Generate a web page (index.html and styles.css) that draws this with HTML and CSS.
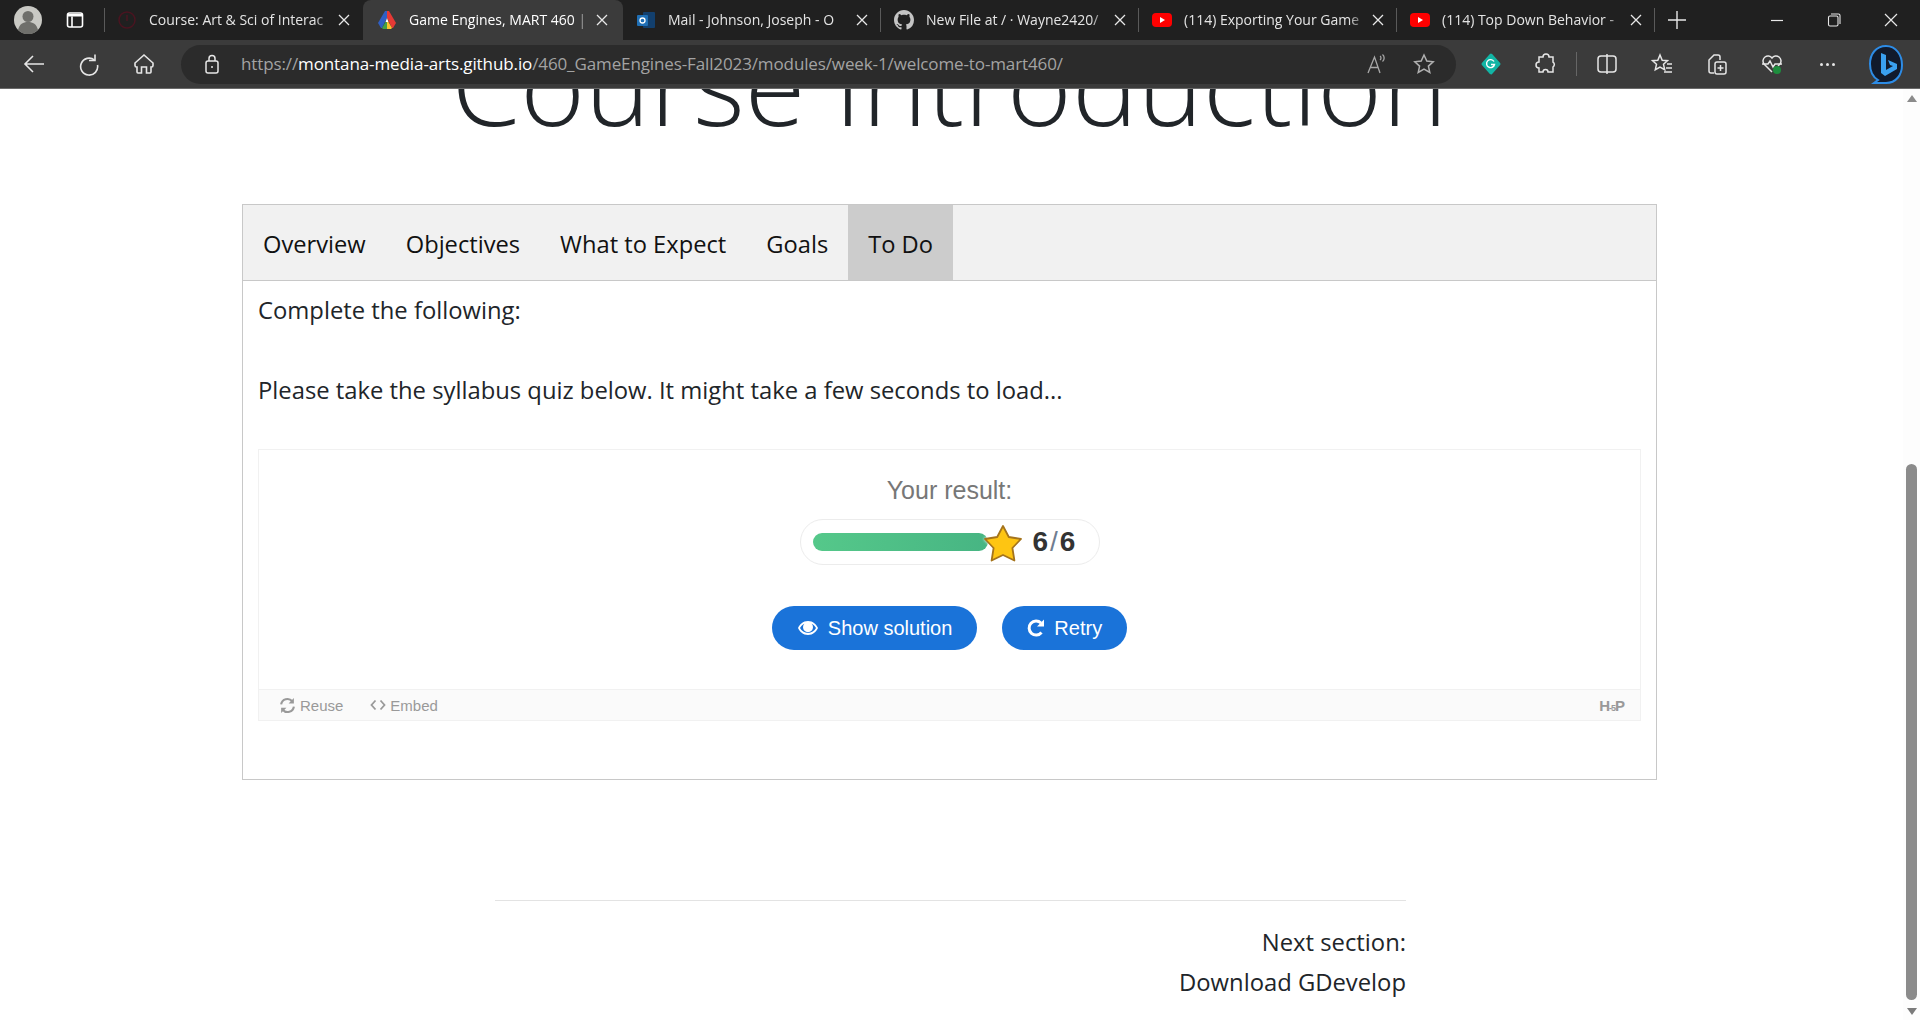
FILE: index.html
```html
<!DOCTYPE html>
<html lang="en">
<head>
    <meta charset="UTF-8">
    <meta name="viewport" content="width=device-width, initial-scale=1.0">
    <title>Game Engines, MART 460</title>
    <link rel="stylesheet" href="styles.css">
</head>
<body>
    <!-- Browser frame -->
    <header class="browser">
        <div class="tabstrip">
            <div class="profile">
                <svg width="28" height="28" viewBox="0 0 28 28"><circle cx="14" cy="14" r="14" fill="#c9c9c4"/><circle cx="14" cy="10.500" r="5.500" fill="#6f6f6b"/><path d="M4 24c1.500-6 5-8 10-8s8.500 2 10 8a14 14 0 0 1-20 0z" fill="#6f6f6b"/></svg>
            </div>
            <div class="tab-actions">
                <svg width="18" height="18" viewBox="0 0 18 18" fill="none" stroke="#fff" stroke-width="1.600"><rect x="1.500" y="2" width="15" height="14" rx="2"/><path d="M6 5.500V16"/><path d="M2 3h14v2.500H2z" fill="#fff" stroke="none"/></svg>
            </div>
            <div class="tab tab-first">
                <svg class="favicon" viewBox="0 0 20 20" fill="none" stroke="#4a1420" stroke-width="1.500"><circle cx="10" cy="10" r="8"/><path d="M10 5v6"/></svg>
                <span class="tab-title">Course: Art &amp; Sci of Interac</span>
                <svg class="tab-close" width="12" height="12" viewBox="0 0 12 12" stroke="#e8e8e8" stroke-width="1.300"><path d="M1 1l10 10M11 1 1 11"/></svg>
            </div>
            <div class="tab tab-active">
                <svg class="favicon" viewBox="0 0 20 20"><path d="M8 1h2v7L5 18H4L1 13z" fill="#2f5fc4"/><path d="M10 1h2l7 12-3 5h-1l-5-10z" fill="#e53935"/><path d="M5 18l3.500-6H10v7H6z" fill="#43a047"/><path d="M10 12h1.500l3.500 6-1 1h-4z" fill="#fbc02d"/><path d="M10 8l-1.500 4h3z" fill="#fff"/></svg>
                <span class="tab-title">Game Engines, MART 460 |</span>
                <svg class="tab-close" width="12" height="12" viewBox="0 0 12 12" stroke="#e8e8e8" stroke-width="1.300"><path d="M1 1l10 10M11 1 1 11"/></svg>
            </div>
            <div class="tab">
                <svg class="favicon" viewBox="0 0 20 20"><rect x="7" y="2" width="12" height="16" rx="1" fill="#123f6d"/><rect x="1" y="5" width="11" height="11" rx="1" fill="#1f6fb5"/><circle cx="6.500" cy="10.500" r="2.500" fill="none" stroke="#fff" stroke-width="1.300"/></svg>
                <span class="tab-title">Mail - Johnson, Joseph - O</span>
                <svg class="tab-close" width="12" height="12" viewBox="0 0 12 12" stroke="#e8e8e8" stroke-width="1.300"><path d="M1 1l10 10M11 1 1 11"/></svg>
            </div>
            <div class="tab">
                <svg class="favicon" viewBox="0 0 16 16" fill="#c4c4c4"><path d="M8 0C3.580 0 0 3.580 0 8c0 3.540 2.290 6.530 5.470 7.590.4.070.55-.17.55-.38 0-.19-.01-.82-.01-1.490-2.010.37-2.530-.49-2.690-.94-.09-.23-.48-.94-.82-1.130-.28-.15-.68-.52-.01-.53.630-.01 1.080.58 1.230.82.720 1.210 1.870.87 2.330.66.070-.52.280-.87.510-1.070-1.780-.2-3.640-.89-3.640-3.950 0-.87.310-1.590.820-2.150-.08-.2-.36-1.020.08-2.120 0 0 .67-.21 2.200.82.640-.18 1.320-.27 2-.27s1.360.09 2 .27c1.530-1.040 2.200-.82 2.200-.82.440 1.100.16 1.920.08 2.120.51.560.82 1.270.82 2.150 0 3.070-1.870 3.750-3.650 3.950.29.250.54.730.54 1.480 0 1.070-.01 1.930-.01 2.200 0 .21.150.46.550.38A8.010 8.010 0 0 0 16 8c0-4.420-3.580-8-8-8z"/></svg>
                <span class="tab-title">New File at / &#183; Wayne2420/</span>
                <svg class="tab-close" width="12" height="12" viewBox="0 0 12 12" stroke="#e8e8e8" stroke-width="1.300"><path d="M1 1l10 10M11 1 1 11"/></svg>
            </div>
            <div class="tab">
                <svg class="favicon" viewBox="0 0 20 20"><rect y="3" width="20" height="14" rx="4" fill="#f00"/><path d="M8 7l5 3-5 3z" fill="#fff"/></svg>
                <span class="tab-title">(114) Exporting Your Game</span>
                <svg class="tab-close" width="12" height="12" viewBox="0 0 12 12" stroke="#e8e8e8" stroke-width="1.300"><path d="M1 1l10 10M11 1 1 11"/></svg>
            </div>
            <div class="tab">
                <svg class="favicon" viewBox="0 0 20 20"><rect y="3" width="20" height="14" rx="4" fill="#f00"/><path d="M8 7l5 3-5 3z" fill="#fff"/></svg>
                <span class="tab-title">(114) Top Down Behavior -</span>
                <svg class="tab-close" width="12" height="12" viewBox="0 0 12 12" stroke="#e8e8e8" stroke-width="1.300"><path d="M1 1l10 10M11 1 1 11"/></svg>
            </div>
            <div class="new-tab">
                <svg width="18" height="18" viewBox="0 0 18 18" stroke="#e8e8e8" stroke-width="1.400"><path d="M9 0v18M0 9h18"/></svg>
            </div>
            <div class="window-controls">
                <svg width="14" height="14" viewBox="0 0 14 14" stroke="#e8e8e8" stroke-width="1.200"><path d="M1 7.500h12"/></svg>
                <svg width="14" height="14" viewBox="0 0 14 14" fill="none" stroke="#e8e8e8" stroke-width="1.100"><rect x="1.500" y="3" width="9.500" height="10" rx="1.500"/><path d="M4 1h7.500A1.500 1.500 0 0 1 13 2.500V11"/></svg>
                <svg width="14" height="14" viewBox="0 0 14 14" stroke="#e8e8e8" stroke-width="1.200"><path d="M1 1l12 12M13 1 1 13"/></svg>
            </div>
        </div>
        <div class="toolbar">
            <div class="nav-buttons">
                <svg width="24" height="24" viewBox="0 0 24 24" fill="none" stroke="#e6e6e6" stroke-width="1.600"><path d="M22 12H3M11 4l-8 8 8 8"/></svg>
                <svg width="24" height="24" viewBox="0 0 24 24" fill="none" stroke="#e6e6e6" stroke-width="1.600"><path d="M18 2.500v6h-6"/><path d="M17.500 8A8.500 8.500 0 1 0 20.500 13"/></svg>
                <svg width="24" height="24" viewBox="0 0 24 24" fill="none" stroke="#e6e6e6" stroke-width="1.600"><path d="M3 11 12 3l9 8v2.500a1.500 1.500 0 0 1-1.500 1.500H19v5a1 1 0 0 1-1 1h-3.500v-6h-5v6H6a1 1 0 0 1-1-1v-5H4.500A1.500 1.500 0 0 1 3 13.500z"/></svg>
            </div>
            <div class="omnibox">
                <svg class="lock" width="18" height="20" viewBox="0 0 18 20" fill="none" stroke="#e6e6e6" stroke-width="1.500"><rect x="3" y="7" width="12" height="12" rx="2"/><path d="M6 7V4.500a3 3 0 0 1 6 0V7"/><circle cx="9" cy="13" r="1" fill="#e6e6e6" stroke="none"/></svg>
                <div class="url"><span class="url-dim">https://</span>montana-media-arts.github.io<span class="url-dim">/460_GameEngines-Fall2023/modules/week-1/welcome-to-mart460/</span></div>
                <svg width="22" height="22" viewBox="0 0 22 22" fill="none" stroke="#a8a8a8" stroke-width="1.300"><path d="M3 20 9.500 4 15 20M5.500 14.500h8M15 3c1.300.8 1.300 3 0 4M17.500 1.500c2.200 1.800 2.200 5 0 7"/></svg>
                <svg class="omni-star" width="22" height="22" viewBox="0 0 22 22" fill="none" stroke="#b0b0b0" stroke-width="1.500"><path d="m11 2 2.800 6 6.400.7-4.800 4.400 1.400 6.400L11 16.200l-5.800 3.300 1.400-6.400-4.800-4.400L8.200 8z"/></svg>
            </div>
            <div class="extensions">
                <svg width="24" height="24" viewBox="0 0 24 24"><path d="M12 3 20 12 12 21 4 12z" fill="#12b5a5" stroke="#12b5a5" stroke-width="3" stroke-linejoin="round"/><path d="M15 9.500a4 4 0 1 0 .5 3H12" fill="none" stroke="#fff" stroke-width="1.400"/></svg>
                <svg width="24" height="24" viewBox="0 0 24 24" fill="none" stroke="#e6e6e6" stroke-width="1.500"><path d="M9 5a3 3 0 0 1 6 0h4v5a3 3 0 0 1 0 5v5h-5a2.500 2.500 0 0 0-5 0H5v-4a3 3 0 0 1 0-6V5z"/></svg>
                <span class="toolbar-divider"></span>
                <svg width="24" height="24" viewBox="0 0 24 24" fill="none" stroke="#e6e6e6" stroke-width="1.500"><rect x="3" y="4" width="18" height="16" rx="3"/><path d="M12 2v20"/></svg>
                <svg width="24" height="24" viewBox="0 0 24 24" fill="none" stroke="#e6e6e6" stroke-width="1.500"><path d="m10 3 2.200 5.200 5.300.5-4 3.600 1.200 5.400L10 15l-4.700 2.700 1.200-5.400-4-3.600 5.300-.5zM17 12h5M16 16h6M14 20h8"/></svg>
                <svg width="24" height="24" viewBox="0 0 24 24" fill="none" stroke="#e6e6e6" stroke-width="1.500"><path d="M9 21H6a2 2 0 0 1-2-2V8l5-5h4a2 2 0 0 1 2 2v3"/><rect x="10" y="10" width="11" height="12" rx="2"/><path d="M15.500 13v6M12.500 16h6"/></svg>
                <svg width="24" height="24" viewBox="0 0 24 24" fill="none" stroke="#e6e6e6" stroke-width="1.500"><path d="M12 20 4 12a5 5 0 0 1 8-6 5 5 0 0 1 8 6l-2 2"/><path d="M2 12h6l2-3 3 6 2-3h7"/><circle cx="17" cy="18" r="4" fill="#1e8e3e" stroke="none"/></svg>
                <span class="more-dots"><i></i><i></i><i></i></span>
                <svg class="bing" width="36" height="40" viewBox="0 0 36 40"><path d="M18 2C8 2 2 10 2 20c0 8 3 13 8 16l-4 3h12c10 0 16-8 16-18S28 2 18 2z" fill="#111a2c" stroke="#2d8ce6" stroke-width="2"/><path d="M13 9l5 2v15l7-4-3-1-2-5 9 4v5l-12 7-4-3z" fill="#3aa0f0"/></svg>
            </div>
        </div>
    </header>

    <div class="viewport">
        <main class="page">
            <h1 class="page-title">Course Introduction</h1>

            <section class="tabs-card">
                <nav class="tabs-nav">
                    <a class="tabs-link">Overview</a>
                    <a class="tabs-link">Objectives</a>
                    <a class="tabs-link">What to Expect</a>
                    <a class="tabs-link">Goals</a>
                    <a class="tabs-link tabs-link-active">To Do</a>
                </nav>
                <div class="tabs-body">
                    <p class="intro">Complete the following:</p>
                    <p class="intro intro-last">Please take the syllabus quiz below. It might take a few seconds to load...</p>

                    <!-- H5P embed -->
                    <div class="quiz">
                        <div class="quiz-result">
                            <div class="result-label">Your result:</div>
                            <div class="score-pill">
                                <div class="score-bar">
                                    <svg class="score-star" width="42" height="40" viewBox="0 0 42 40"><path d="M21 3l5.800 11 12.200 2-8.600 9 2 12.500L21 32l-11.400 5.500 2-12.500L3 16l12.200-2z" fill="#fec512" stroke="#a5741c" stroke-width="1.800" stroke-linejoin="round"/></svg>
                                </div>
                                <div class="score-text">6<span class="score-slash">/</span>6</div>
                            </div>
                            <div class="quiz-buttons">
                                <button class="quiz-btn">
                                    <svg width="22" height="16" viewBox="0 0 22 16" fill="#fff"><path fill-rule="evenodd" d="M11 1C6 1 2.500 4.500 1 8c1.500 3.500 5 7 10 7s8.500-3.500 10-7c-1.500-3.500-5-7-10-7zm0 12c-3.500 0-6.500-2.200-8-5 1-1.800 2.500-3.300 4.400-4.200A5 5 0 1 0 14.600 3.800C16.500 4.700 18 6.200 19 8c-1.500 2.800-4.500 5-8 5z"/></svg>
                                    Show solution
                                </button>
                                <button class="quiz-btn">
                                    <svg width="18" height="18" viewBox="0 0 18 18" fill="none" stroke="#fff" stroke-width="3"><path d="M14.500 13.500A7 7 0 1 1 14 4"/><path d="M17 0.500v7h-7z" fill="#fff" stroke="none"/></svg>
                                    Retry
                                </button>
                            </div>
                        </div>
                        <div class="quiz-footer">
                            <span class="footer-link">
                                <svg width="17" height="17" viewBox="0 0 16 16" fill="none" stroke="#999" stroke-width="2"><path d="M2 7a6 6 0 0 1 10.500-3M14 9a6 6 0 0 1-10.500 3"/><path d="M14 1v5H9zM2 15v-5h5z" fill="#999" stroke="none"/></svg>
                                Reuse
                            </span>
                            <span class="footer-link">
                                <svg width="16" height="12" viewBox="0 0 16 12" fill="none" stroke="#999" stroke-width="1.800"><path d="M5.500 1.500 1.500 6l4 4.500M10.500 1.500l4 4.500-4 4.500"/></svg>
                                Embed
                            </span>
                            <span class="h5p-mark">H<small>-5</small>P</span>
                        </div>
                    </div>
                </div>
            </section>

            <div class="next-section">
                <div>Next section:</div>
                <div>Download GDevelop</div>
            </div>
        </main>

        <div class="scrollbar">
            <span class="arrow-up"></span>
            <div class="scroll-track"><div class="scroll-thumb"></div></div>
            <span class="arrow-down"></span>
        </div>
    </div>
</body>
</html>
```

FILE: styles.css
```css
* {
    box-sizing: border-box;
}
html, body {
    height: 100%;
}
body {
    margin: 0;
    display: flex;
    flex-direction: column;
    overflow: hidden;
    background: #fff;
    font-family: "Open Sans", "Noto Sans", sans-serif;
    color: #212529;
}

/* Browser frame */
.browser {
    flex: none;
    position: relative;
    z-index: 2;
    background: #3b3b3b;
    border-bottom: 1px solid #6a6a6a;
    font-family: "Open Sans", sans-serif;
}
.tabstrip {
    height: 40px;
    display: flex;
    align-items: center;
    background: #202020;
}
.profile {
    width: 55px;
    padding-left: 14px;
    display: flex;
}
.tab-actions {
    width: 50px;
    height: 40px;
    padding-left: 11px;
    display: flex;
    align-items: center;
    background: linear-gradient(#5a5a5a, #5a5a5a) right center / 1px 24px no-repeat;
}
.tab {
    width: 258px;
    height: 40px;
    padding: 0 8px 0 13px;
    display: flex;
    align-items: center;
    color: #e4e4e4;
    font-size: 14px;
    background: linear-gradient(#5a5a5a, #5a5a5a) right center / 1px 24px no-repeat;
}
.tab-first {
    padding-left: 12px;
    background: none;
}
.tab-active {
    width: 260px;
    padding: 0 10px 0 14px;
    background: #3b3b3b;
    border-radius: 8px 8px 0 0;
    color: #fff;
}
.favicon {
    flex: none;
    width: 20px;
    height: 20px;
    margin-right: 12px;
}
.tab-title {
    flex: 1;
    min-width: 0;
    padding-bottom: 2px;
    white-space: nowrap;
    overflow: hidden;
    -webkit-mask-image: linear-gradient(to right, #000 90%, transparent 100%);
    mask-image: linear-gradient(to right, #000 90%, transparent 100%);
}
.tab-close {
    flex: none;
    margin: 0 5px;
}
.new-tab {
    width: 46px;
    padding-left: 13px;
    display: flex;
}
.window-controls {
    margin-left: auto;
    width: 150px;
    padding-right: 22px;
    display: flex;
    justify-content: space-between;
}
.toolbar {
    height: 48px;
    display: flex;
    align-items: center;
}
.nav-buttons {
    width: 181px;
    padding-left: 22px;
    display: flex;
    gap: 31px;
}
.omnibox {
    width: 1275px;
    height: 39px;
    padding: 0 21px 0 22px;
    display: flex;
    align-items: center;
    background: #2b2b2b;
    border-radius: 20px;
}
.lock {
    flex: none;
    margin-right: 20px;
}
.url {
    flex: 1;
    padding-bottom: 2px;
    font-size: 17px;
    letter-spacing: -0.1px;
    color: #fff;
    white-space: nowrap;
}
.url-dim {
    font-size: 17px;
    letter-spacing: -0.12px;
    color: #a3a3a3;
}
.omni-star {
    margin-left: 26px;
}
.extensions {
    flex: 1;
    display: flex;
    align-items: center;
    gap: 31px;
    padding-left: 23px;
}
.toolbar-divider {
    width: 1px;
    height: 24px;
    margin: 0 -13px;
    background: #666;
}
.more-dots {
    width: 24px;
    display: flex;
    justify-content: center;
    gap: 3px;
}
.more-dots i {
    width: 3px;
    height: 3px;
    border-radius: 50%;
    background: #e6e6e6;
}
.bing {
    margin-left: -2px;
}

/* Page */
.viewport {
    flex: 1;
    min-height: 0;
    display: flex;
}
.page {
    flex: 1;
    min-width: 0;
    overflow: hidden;
    padding: 0 246px 0 242px;
}
.page-title {
    margin: -95px 0 0;
    height: 210px;
    font-weight: 300;
    font-size: 110.5px;
    line-height: 178px;
    text-align: center;
    white-space: nowrap;
    color: #212529;
}
.tabs-card {
    height: 576px;
    border: 1px solid #c8c8c8;
}
.tabs-nav {
    height: 76px;
    display: flex;
    background: #f1f1f1;
    border-bottom: 1px solid #c8c8c8;
}
.tabs-link {
    padding: 3px 20px 0;
    display: flex;
    align-items: center;
    font-size: 23.7px;
    color: #111;
}
.tabs-link-active {
    background: #ccc;
}
.tabs-body {
    padding: 9px 15px 0;
}
.intro {
    margin: 0 0 40px;
    font-size: 23.8px;
    line-height: 40px;
    color: #212529;
}
.intro-last {
    margin-bottom: 39px;
}
.quiz {
    border: 1px solid #f1f1f1;
    font-family: "Liberation Sans", Arial, sans-serif;
}
.quiz-result {
    height: 239px;
    padding-top: 24px;
    display: flex;
    flex-direction: column;
    align-items: center;
}
.result-label {
    font-size: 25px;
    line-height: 32px;
    color: #777;
}
.score-pill {
    width: 300px;
    height: 46px;
    margin-top: 13px;
    padding: 0 12px;
    display: flex;
    align-items: center;
    border: 1px solid #ececec;
    border-radius: 23px;
}
.score-bar {
    position: relative;
    width: 175px;
    height: 18px;
    border-radius: 9px;
    background: linear-gradient(to right, #55c88a, #47b583);
}
.score-star {
    position: absolute;
    right: -36px;
    top: -10px;
    filter: drop-shadow(0 0 1.500px #fff);
}
.score-text {
    margin-left: 45px;
    font-size: 28px;
    font-weight: bold;
    color: #333;
}
.score-slash {
    margin: 0 2px;
    font-weight: normal;
    color: #6f7d91;
}
.quiz-buttons {
    margin-top: 41px;
    display: flex;
    gap: 25px;
}
.quiz-btn {
    height: 44px;
    padding: 0 25px;
    display: flex;
    align-items: center;
    gap: 9px;
    background: #1a73d9;
    color: #fff;
    border: none;
    border-radius: 22px;
    font-family: inherit;
    font-size: 20px;
}
.quiz-footer {
    height: 31px;
    padding: 0 16px 0 20px;
    display: flex;
    align-items: center;
    gap: 27px;
    background: #fafafa;
    border-top: 1px solid #f1f1f1;
    font-size: 15px;
    color: #999;
}
.footer-link {
    display: flex;
    align-items: center;
    gap: 4px;
}
.h5p-mark {
    margin-left: auto;
    font-weight: bold;
    font-size: 15px;
    letter-spacing: -1px;
}
.h5p-mark small {
    font-size: 9px;
}
.next-section {
    margin: 120px 0 0 253px;
    width: 911px;
    padding-top: 21px;
    border-top: 1px solid #e3e3e3;
    text-align: right;
    font-size: 23.8px;
    line-height: 40px;
    color: #212529;
}

/* Scrollbar */
.scrollbar {
    flex: none;
    width: 17px;
    display: flex;
    flex-direction: column;
    align-items: center;
    background: #fdfdfd;
}
.scroll-track {
    flex: 1;
    width: 11px;
    margin: 9px 0 5px;
    padding-top: 353px;
}
.scroll-thumb {
    height: 536px;
    background: #8b8b8b;
    border-radius: 6px;
}
.arrow-up, .arrow-down {
    width: 0;
    height: 0;
    border-left: 5px solid transparent;
    border-right: 5px solid transparent;
}
.arrow-up {
    margin-top: 6px;
    border-bottom: 7px solid #8b8b8b;
}
.arrow-down {
    margin-bottom: 5px;
    border-top: 7px solid #7b7b7b;
}
```
